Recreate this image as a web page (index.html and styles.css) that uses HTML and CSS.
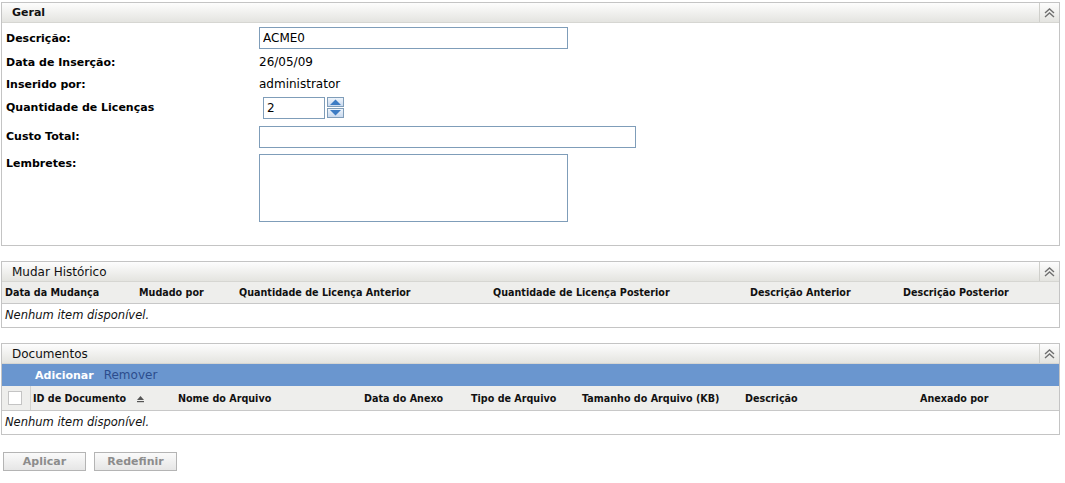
FILE: index.html
```html
<!DOCTYPE html>
<html lang="pt">
<head>
    <meta charset="UTF-8">
    <title>Licença - Geral</title>
    <link rel="stylesheet" href="styles.css">
</head>
<body>
    <div class="panel panel-geral">
        <div class="panel-head">
            <span class="panel-title">Geral</span>
            <span class="collapse">
                <svg width="11" height="10" viewBox="0 0 11 10"><path d="M1 5 L5.5 1 L10 5 M1 9 L5.5 5 L10 9" fill="none" stroke="#6f6f6f" stroke-width="1.4"/></svg>
            </span>
        </div>
        <div class="form">
            <div class="row row-desc">
                <label class="lbl">Descrição:</label>
                <input class="txt txt-desc" type="text" value="ACME0">
            </div>
            <div class="row row-text">
                <span class="lbl">Data de Inserção:</span>
                <span class="val">26/05/09</span>
            </div>
            <div class="row row-text">
                <span class="lbl">Inserido por:</span>
                <span class="val">administrator</span>
            </div>
            <div class="row row-qty">
                <label class="lbl">Quantidade de Licenças</label>
                <div class="spinner">
                    <input class="txt txt-qty" type="text" value="2">
                    <div class="spin-btns">
                        <span class="spin">
                            <svg width="15" height="8" viewBox="0 0 15 8"><path d="M2 7 L7.5 1.5 L13 7 Z" fill="#3d7cc4"/></svg>
                        </span>
                        <span class="spin">
                            <svg width="15" height="8" viewBox="0 0 15 8"><path d="M2 1 L7.5 6.5 L13 1 Z" fill="#3d7cc4"/></svg>
                        </span>
                    </div>
                </div>
            </div>
            <div class="row row-cost">
                <label class="lbl">Custo Total:</label>
                <input class="txt txt-cost" type="text" value="">
            </div>
            <div class="row row-notes">
                <label class="lbl">Lembretes:</label>
                <textarea class="notes"></textarea>
            </div>
        </div>
    </div>

    <div class="panel">
        <div class="panel-head">
            <span class="panel-title">Mudar Histórico</span>
            <span class="collapse">
                <svg width="11" height="10" viewBox="0 0 11 10"><path d="M1 5 L5.5 1 L10 5 M1 9 L5.5 5 L10 9" fill="none" stroke="#6f6f6f" stroke-width="1.4"/></svg>
            </span>
        </div>
        <div class="cols cols-hist">
            <span>Data da Mudança</span>
            <span>Mudado por</span>
            <span>Quantidade de Licença Anterior</span>
            <span>Quantidade de Licença Posterior</span>
            <span>Descrição Anterior</span>
            <span>Descrição Posterior</span>
        </div>
        <div class="empty">Nenhum item disponível.</div>
    </div>

    <div class="panel">
        <div class="panel-head">
            <span class="panel-title">Documentos</span>
            <span class="collapse">
                <svg width="11" height="10" viewBox="0 0 11 10"><path d="M1 5 L5.5 1 L10 5 M1 9 L5.5 5 L10 9" fill="none" stroke="#6f6f6f" stroke-width="1.4"/></svg>
            </span>
        </div>
        <div class="toolbar">
            <a class="tool tool-add">Adicionar</a>
            <a class="tool tool-remove">Remover</a>
        </div>
        <div class="cols cols-docs">
            <span class="check-cell"><span class="check"></span></span>
            <span>ID de Documento
                <svg class="sort" width="9" height="8" viewBox="0 0 9 8"><path d="M1 5 L4.5 1 L8 5 Z" fill="#555"/><rect x="1" y="6" width="7" height="1.2" fill="#555"/></svg>
            </span>
            <span>Nome do Arquivo</span>
            <span>Data do Anexo</span>
            <span>Tipo de Arquivo</span>
            <span>Tamanho do Arquivo (KB)</span>
            <span>Descrição</span>
            <span>Anexado por</span>
        </div>
        <div class="empty">Nenhum item disponível.</div>
    </div>

    <div class="actions">
        <button class="btn btn-apply" disabled>Aplicar</button>
        <button class="btn btn-reset" disabled>Redefinir</button>
    </div>
</body>
</html>
```

FILE: styles.css
```css
body {
    margin: 0;
    padding: 2px 0 0 1px;
    font-family: "DejaVu Sans", Verdana, sans-serif;
    font-size: 12px;
    color: #000;
    background: #fff;
    width: 1059px;
}
.panel {
    border: 1px solid #c4c4c4;
    margin-bottom: 15px;
}
.panel-head {
    height: 19px;
    display: flex;
    align-items: center;
    justify-content: space-between;
    background: linear-gradient(#fdfdfd, #e4e4e0);
    border-bottom: 1px solid #d6d6d2;
}
.panel-title {
    padding-left: 10px;
    color: #111;
}
.panel-geral .panel-title {
    font-weight: bold;
    font-size: 11px;
}
.collapse {
    width: 19px;
    height: 19px;
    border-left: 1px solid #cfcfcb;
    display: flex;
    align-items: center;
    justify-content: center;
}
.form {
    padding: 2px 0 23px 4px;
}
.row {
    display: flex;
    align-items: center;
}
.lbl {
    width: 253px;
    font-weight: bold;
    font-size: 11px;
    color: #000;
}
.row-desc {
    height: 26px;
}
.row-text {
    height: 22px;
}
.row-qty {
    height: 25px;
}
.row-cost {
    height: 33px;
}
.row-notes {
    align-items: flex-start;
    padding-top: 1px;
}
.row-notes .lbl {
    padding-top: 3px;
}
.txt {
    box-sizing: border-box;
    height: 22px;
    border: 1px solid #7f9db9;
    font-family: "DejaVu Sans", Verdana, sans-serif;
    font-size: 12px;
    padding: 0 3px;
    margin: 0;
}
.txt-desc {
    width: 309px;
}
.txt-cost {
    width: 377px;
}
.val {
    font-size: 12px;
}
.spinner {
    display: flex;
    align-items: center;
    margin-left: 4px;
    gap: 2px;
}
.txt-qty {
    width: 62px;
}
.spin-btns {
    display: flex;
    flex-direction: column;
    gap: 1px;
}
.spin {
    box-sizing: border-box;
    width: 17px;
    height: 10px;
    border: 1px solid #7f9db9;
    background: linear-gradient(#eef4fb, #c9d9ee);
    display: flex;
    align-items: center;
    justify-content: center;
}
.notes {
    box-sizing: border-box;
    width: 309px;
    height: 68px;
    border: 1px solid #7f9db9;
    margin: 0;
    resize: none;
}
.cols {
    display: grid;
    align-items: center;
    background: #eeeeec;
    border-bottom: 1px solid #c8c8c8;
    font-weight: bold;
    font-size: 9.6px;
    color: #111;
}
.cols-hist {
    height: 21px;
    grid-template-columns: 134px 100px 254px 257px 153px 1fr;
    padding-left: 3px;
}
.cols-docs {
    height: 24px;
    grid-template-columns: 29px 147px 186px 107px 111px 163px 175px 1fr;
}
.check-cell {
    height: 24px;
    border-right: 1px solid #d4d4d0;
    display: flex;
    align-items: center;
    padding-left: 6px;
    box-sizing: border-box;
}
.check {
    width: 12px;
    height: 12px;
    background: #fff;
    border: 1px solid #c4c4c4;
}
.cols-docs > span:nth-child(2) {
    padding-left: 2px;
}
.sort {
    margin-left: 6px;
    vertical-align: -1px;
}
.empty {
    height: 23px;
    line-height: 23px;
    padding-left: 3px;
    font-style: italic;
    font-size: 11.5px;
    color: #111;
}
.toolbar {
    height: 22px;
    background: #6a96cf;
    display: flex;
    align-items: center;
    padding-left: 33px;
    gap: 10px;
}
.tool {
    cursor: pointer;
}
.tool-add {
    color: #fff;
    font-weight: bold;
    font-size: 11px;
}
.tool-remove {
    color: #2c4d8d;
    font-size: 12px;
}
.actions {
    display: flex;
    gap: 8px;
    padding: 2px 0 0 2px;
}
.btn {
    width: 83px;
    height: 19px;
    border: 1px solid #b4b4b4;
    background: linear-gradient(#fafafa, #e6e6e6);
    color: #8c8c8c;
    font-family: "DejaVu Sans", Verdana, sans-serif;
    font-weight: bold;
    font-size: 11px;
    padding: 0;
}
```
